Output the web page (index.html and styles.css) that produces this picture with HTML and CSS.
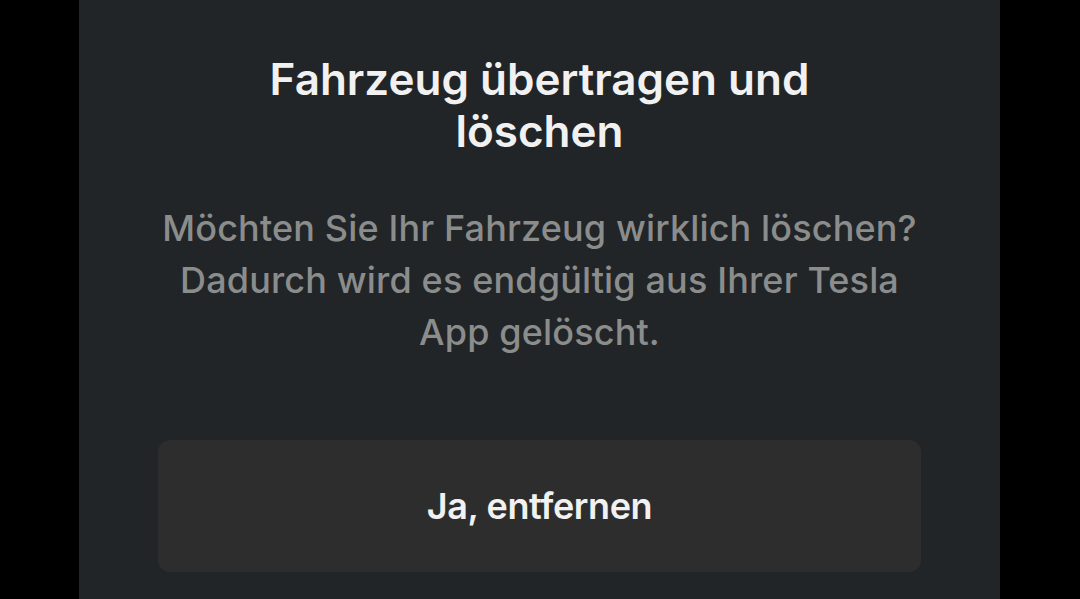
FILE: index.html
```html
<!DOCTYPE html>
<html lang="de">
<head>
<meta charset="utf-8">
<title>Fahrzeug übertragen und löschen</title>
<link rel="stylesheet" href="styles.css">
</head>
<body>
<main class="sheet">
  <h1 class="title">Fahrzeug übertragen und löschen</h1>
  <p class="message">Möchten Sie Ihr Fahrzeug wirklich löschen? Dadurch wird es endgültig aus Ihrer Tesla App gelöscht.</p>
  <button class="action" type="button">Ja, entfernen</button>
</main>
</body>
</html>
```
FILE: styles.css
```css
html, body {
  margin: 0;
  padding: 0;
  height: 100%;
  background: #000;
}
body {
  display: flex;
  justify-content: center;
  font-family: Inter, "Liberation Sans", sans-serif;
  overflow: hidden;
}
.sheet {
  width: 921px;
  margin-left: -1px;
  min-height: 100%;
  background: #222527;
  box-sizing: border-box;
  padding: 53px 79px 0;
  display: flex;
  flex-direction: column;
  align-items: center;
}
.title {
  margin: 0;
  max-width: 600px;
  font-size: 44px;
  line-height: 52px;
  font-weight: 600;
  color: #f1f1f1;
  text-align: center;
}
.message {
  margin: 45px 0 0;
  max-width: 770px;
  font-size: 36px;
  line-height: 52px;
  font-weight: 500;
  letter-spacing: 0.15px;
  color: #8b8d8d;
  text-align: center;
}
.action {
  margin-top: 82px;
  width: 100%;
  height: 132px;
  flex: none;
  border: none;
  border-radius: 12px;
  background: #2d2d2d;
  color: #f1f1f1;
  font-family: inherit;
  font-size: 36px;
  font-weight: 600;
  letter-spacing: -0.4px;
}
```
